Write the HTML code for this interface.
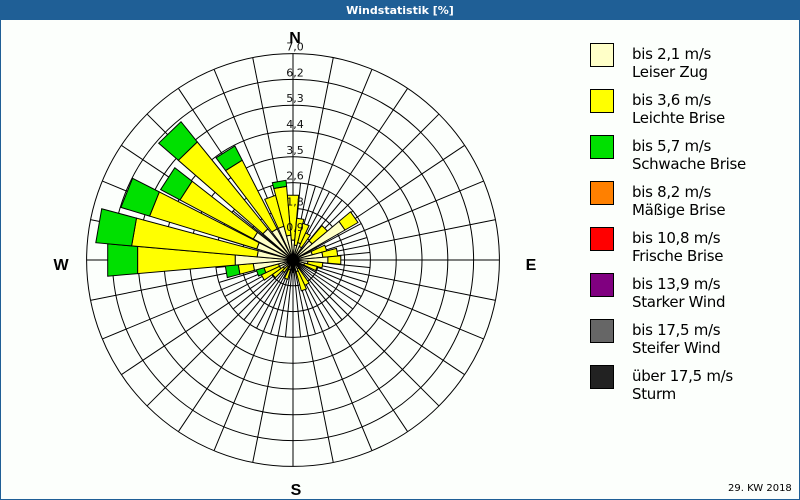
<!DOCTYPE html>
<html><head><meta charset="utf-8"><style>
body{margin:0;width:800px;height:500px;overflow:hidden;background:#fff;font-family:"DejaVu Sans","Liberation Sans",sans-serif}
#f{position:absolute;left:0;top:0;width:798px;height:498px;border:1px solid #1f5f96;background:#fcfffc}
#t{position:absolute;left:0;top:0;width:800px;height:20px;background:#1f5f96;color:#fff;font:bold 11px "DejaVu Sans",sans-serif;text-align:center;line-height:21px}
.lg{position:absolute;left:590px;width:22px;height:22px;border:1px solid #000}
.lt{position:absolute;left:632px;font-size:15px;line-height:18px;color:#000;font-family:"DejaVu Sans",sans-serif;letter-spacing:-0.3px}
#kw{position:absolute;left:728px;top:483px;font-size:10px;color:#000}
</style></head><body>
<div id="f"></div>
<div id="t">Windstatistik [%]</div>
<svg id="s" width="800" height="500" style="position:absolute;left:0;top:0" xmlns="http://www.w3.org/2000/svg"></svg>
<div class="lg" style="top:43px;background:#ffffc8"></div><div class="lt" style="top:45px">bis 2,1 m/s<br>Leiser Zug</div>
<div class="lg" style="top:89px;background:#ffff00"></div><div class="lt" style="top:91px">bis 3,6 m/s<br>Leichte Brise</div>
<div class="lg" style="top:135px;background:#00e000"></div><div class="lt" style="top:137px">bis 5,7 m/s<br>Schwache Brise</div>
<div class="lg" style="top:181px;background:#ff8000"></div><div class="lt" style="top:183px">bis 8,2 m/s<br>Mäßige Brise</div>
<div class="lg" style="top:227px;background:#ff0000"></div><div class="lt" style="top:229px">bis 10,8 m/s<br>Frische Brise</div>
<div class="lg" style="top:273px;background:#800080"></div><div class="lt" style="top:275px">bis 13,9 m/s<br>Starker Wind</div>
<div class="lg" style="top:319px;background:#666"></div><div class="lt" style="top:321px">bis 17,5 m/s<br>Steifer Wind</div>
<div class="lg" style="top:365px;background:#222"></div><div class="lt" style="top:367px">über 17,5 m/s<br>Sturm</div>
<div id="kw">29. KW 2018</div>
<script>
var s=document.getElementById('s'),cx=293,cy=260,h='';
function P(a,r){a=a*Math.PI/180;return (cx+r*Math.sin(a)).toFixed(1)+','+(cy-r*Math.cos(a)).toFixed(1);}
function Ln(a,r0,r1){var p=P(a,r0).split(','),q=P(a,r1).split(',');h+='<line x1="'+p[0]+'" y1="'+p[1]+'" x2="'+q[0]+'" y2="'+q[1]+'" stroke="#000" stroke-width="1"/>';}
for(var i=1;i<=8;i++){h+='<circle cx="'+cx+'" cy="'+cy+'" r="'+(i*25.8).toFixed(1)+'" fill="none" stroke="#000" stroke-width="1"/>';}
for(var k=0;k<32;k++){Ln(k*11.25,0,206);}
for(var k=0;k<32;k++){Ln(k*11.25+5.625,0,77);}
function W(a,r0,r1,c){if(r1<=r0)return;var w=5;h+='<polygon points="'+P(a-w,r0)+' '+P(a-w,r1)+' '+P(a+w,r1)+' '+P(a+w,r0)+'" fill="'+c+'" stroke="#000" stroke-width="1"/>';}
var d=[[0,20,65,0],[10,15,42,0],[20,18,38,0],[30,15,30,0],[45,25,45,0],[55,60,75,0],[70,20,35,0],[80,30,45,0],[90,35,48,0],[100,15,30,0],[110,12,25,0],[150,10,28,0],[160,12,32,0],[200,10,20,0],[220,8,15,0],[230,12,25,0],[240,15,35,0],[250,15,30,38],[260,40,55,68],
[270,58,156,186],[280,36,162,198],[292,38,150,180],[303,45,128,150],[316,40,152,178],[328,35,112,128],[340,35,67,0],[350,25,74,80]];
d.forEach(function(b){W(b[0],0,b[1],'#ffffc8');W(b[0],b[1],b[2],'#ffff00');if(b[3])W(b[0],b[2],b[3],'#00e000');});
h+='<circle cx="'+cx+'" cy="'+cy+'" r="6" fill="#000"/><line x1="'+cx+'" y1="'+cy+'" x2="'+cx+'" y2="'+(cy+13)+'" stroke="#000" stroke-width="3"/>';
var L=['0,9','1,8','2,6','3,5','4,4','5,3','6,2','7,0'];
for(var i=0;i<8;i++){h+='<text x="295" y="'+(cy-(i+1)*25.8-3).toFixed(1)+'" font-size="11" text-anchor="middle" fill="#111" font-family="DejaVu Sans,sans-serif">'+L[i]+'</text>';}
h+='<g font-family="Liberation Sans,sans-serif" font-weight="bold" font-size="16" text-anchor="middle"><text x="295" y="43">N</text><text x="61" y="270">W</text><text x="531" y="270">E</text><text x="296" y="495">S</text></g>';
s.innerHTML=h;
</script>
</body></html>
